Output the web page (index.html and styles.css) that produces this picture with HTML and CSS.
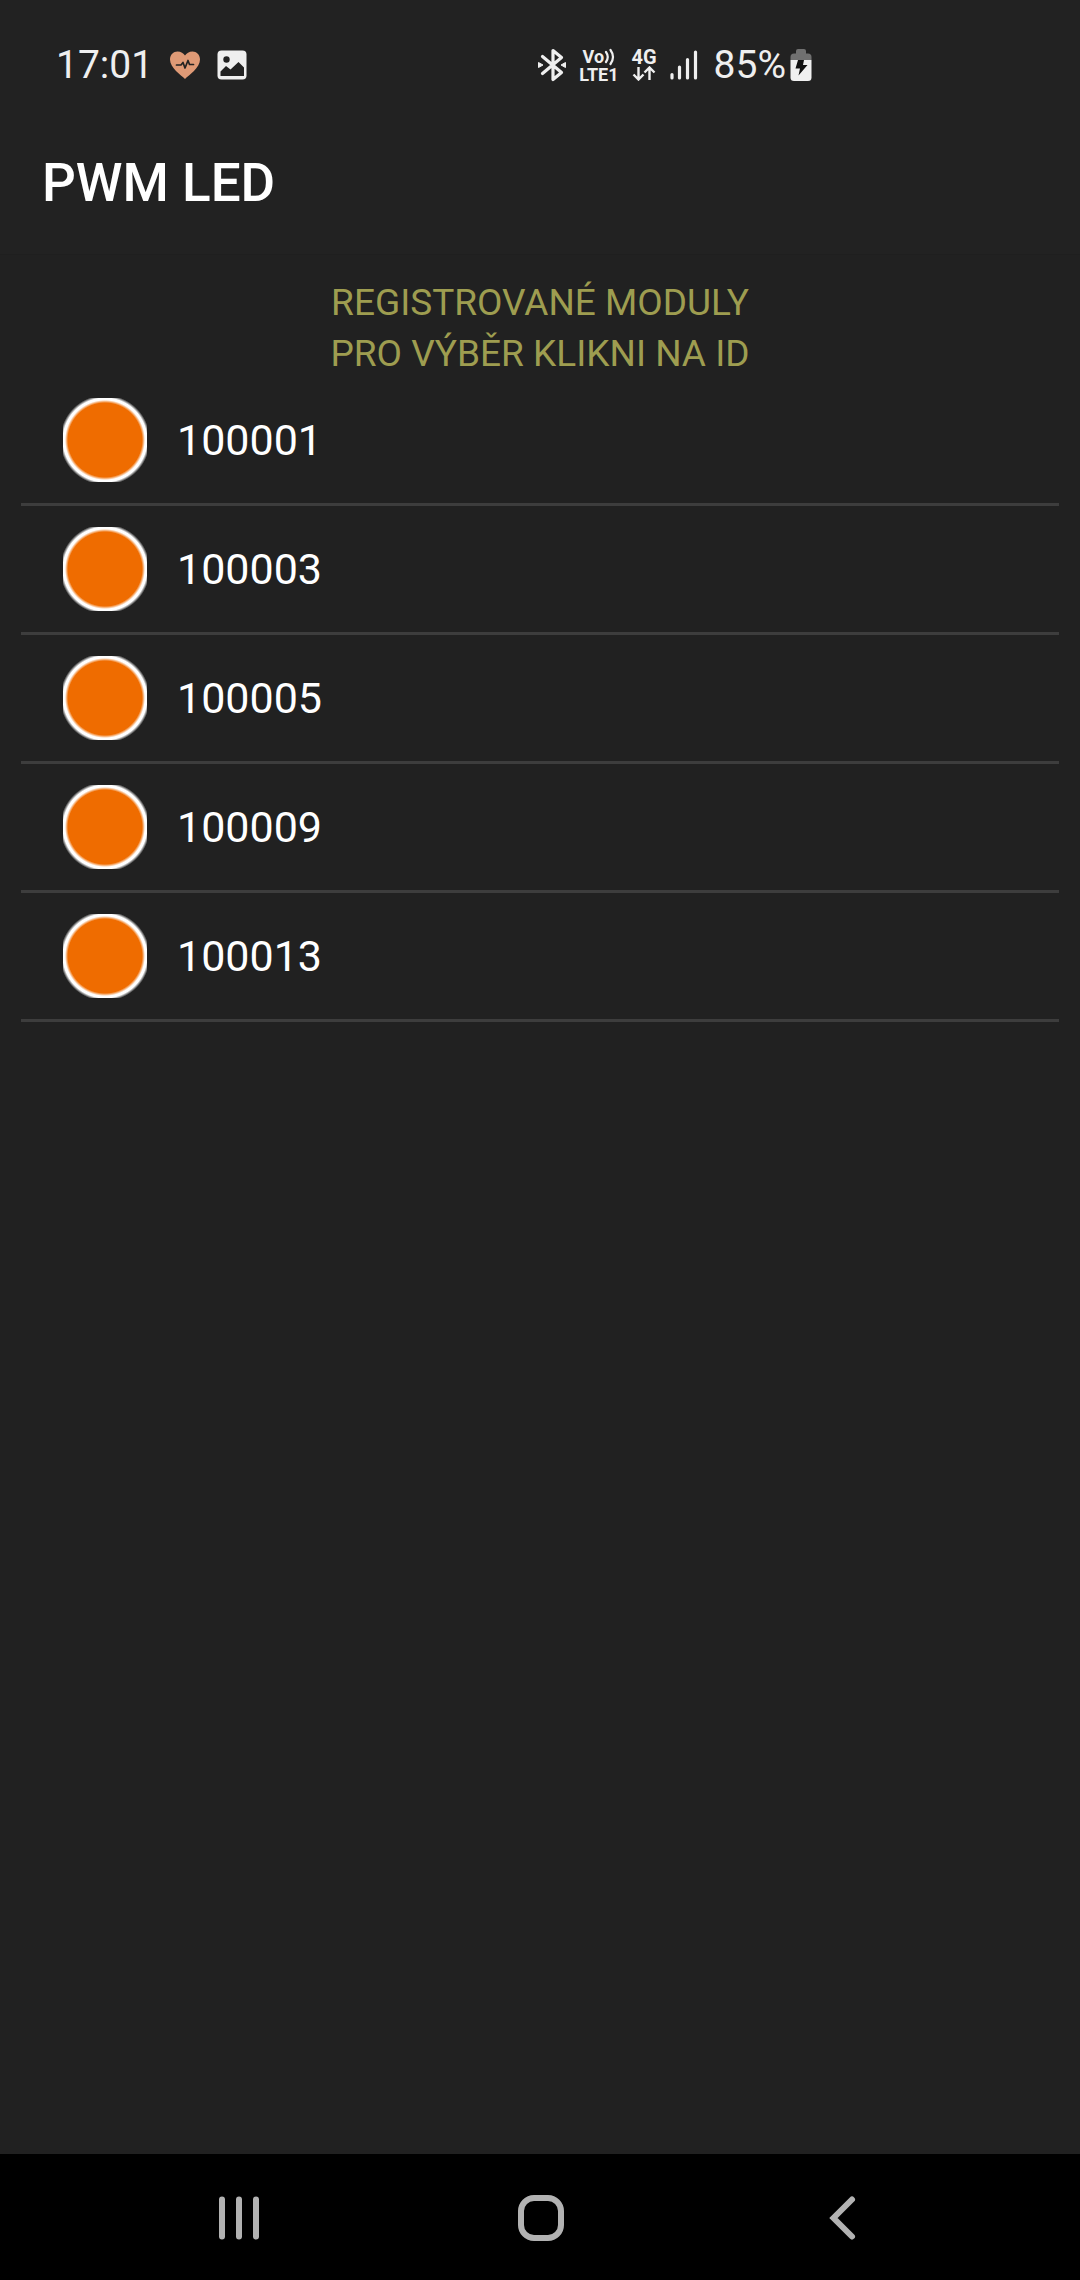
FILE: index.html
```
<!DOCTYPE html>
<html lang="cs">
<head>
    <meta charset="UTF-8">
    <meta name="viewport" content="width=device-width, initial-scale=1.0">
    <title>PWM LED</title>
    <link rel="stylesheet" href="styles.css">
</head>
<body>

    <div class="status-bar">
        <div class="status-left">
            <span class="time">17:01</span>
            <svg width="32" height="30" viewBox="0 0 32 30">
                <path d="M16 29C12 25 1 18 1 9.500C1 4.500 4.500 1.500 8.500 1.500C12 1.500 14.500 3.500 16 5.500C17.500 3.500 20 1.500 23.500 1.500C27.500 1.500 31 4.500 31 9.500C31 18 20 25 16 29Z" fill="#df9a76"/>
                <path d="M7.500 15H12L14 12.500L16 18L19 10.500L20.500 14.500H24.500" fill="none" stroke="#222" stroke-width="1.700" stroke-linecap="round" stroke-linejoin="round"/>
            </svg>
            <svg width="30" height="30" viewBox="0 0 30 30">
                <rect x="0.500" y="0.500" width="29" height="29" rx="4" fill="#efefef"/>
                <circle cx="9.500" cy="9.500" r="3.200" fill="#222"/>
                <path d="M3.500 26V21.500L9 16L13.500 19.500L21.500 12L27 17.500V26Z" fill="#222"/>
            </svg>
        </div>

        <div class="status-right">
            <svg width="28" height="34" viewBox="0 0 28 34">
                <path d="M4.500 8.500L23.500 24.500L15 31.500V2.500L23.500 9.500L4.500 25.500" fill="none" stroke="#efefef" stroke-width="3.200" stroke-linecap="round" stroke-linejoin="round"/>
                <path d="M0.500 14.500L5 17L0.500 19.500Z M27.500 14.500L23 17L27.500 19.500Z" fill="#efefef" stroke="#efefef" stroke-linejoin="round"/>
            </svg>
            <div class="volte">
                <span class="vo">Vo<svg width="11" height="18" viewBox="0 0 11 18"><path d="M2 4Q5.500 9 2 14M6.500 2Q11.500 9 6.500 16" fill="none" stroke="#efefef" stroke-width="2.200" stroke-linecap="round"/></svg></span>
                <span>LTE1</span>
            </div>
            <div class="network">
                <span>4G</span>
                <svg width="24" height="15" viewBox="0 0 24 15">
                    <path d="M6.500 1V13M1.500 8.500L6.500 13.500L11.500 8.500M17.500 14V2M12.500 6.500L17.500 1.500L22.500 6.500" fill="none" stroke="#efefef" stroke-width="2.400"/>
                </svg>
            </div>
            <svg width="28" height="30" viewBox="0 0 28 30">
                <path d="M2 24.500V28M9.500 17V28M17.500 9.500V28M25.500 2V28" stroke="#efefef" stroke-width="3.200" stroke-linecap="round"/>
            </svg>
            <div class="battery">
                <span>85%</span>
                <svg width="22" height="34" viewBox="0 0 22 34">
                    <path d="M0.500 12V9Q0.500 5.500 4 5.500H6V3Q6 1 8 1H14Q16 1 16 3V5.500H18Q21.500 5.500 21.500 9V12Z" fill="#707070"/>
                    <path d="M0.500 12H21.500V29.500Q21.500 33 18 33H4Q0.500 33 0.500 29.500Z" fill="#f0f0f0"/>
                    <path d="M8 12H14L13 17H17.500L8.500 27.500L10 20.500H5.500Z" fill="#111"/>
                </svg>
            </div>
        </div>
    </div>

    <header class="app-bar">
        <h1>PWM LED</h1>
    </header>

    <main>
        <p class="hint">REGISTROVANÉ MODULY<br>PRO VÝBĚR KLIKNI NA ID</p>

        <ul class="modules">
            <li><button><span class="dot"></span>100001</button></li>
            <li><button><span class="dot"></span>100003</button></li>
            <li><button><span class="dot"></span>100005</button></li>
            <li><button><span class="dot"></span>100009</button></li>
            <li><button><span class="dot"></span>100013</button></li>
        </ul>
    </main>

    <nav class="nav-bar">
        <button aria-label="Poslední aplikace">
            <svg width="48" height="48" viewBox="0 0 48 48">
                <path d="M7 5.500V42.500M24 5.500V42.500M41 5.500V42.500" stroke="#b2b2b2" stroke-width="6" stroke-linecap="round"/>
            </svg>
        </button>
        <button aria-label="Domů">
            <svg width="48" height="48" viewBox="0 0 48 48">
                <rect x="4" y="4" width="40" height="40" rx="13" fill="none" stroke="#b2b2b2" stroke-width="6"/>
            </svg>
        </button>
        <button aria-label="Zpět">
            <svg width="48" height="48" viewBox="0 0 48 48">
                <path d="M33 5.500L14.500 24L33 42.500" fill="none" stroke="#b2b2b2" stroke-width="6" stroke-linecap="round"/>
            </svg>
        </button>
    </nav>

</body>
</html>
```
FILE: styles.css
```
/* Basic styling */
body {
    font-family: Roboto, "Noto Sans", sans-serif;
    display: flex;
    flex-direction: column;
    min-height: 100vh;
    margin: 0;
    background-color: #212121;
    color: #ffffff;
}

svg {
    display: block;
    flex-shrink: 0;
}

button {
    font-family: inherit;
    color: inherit;
    background: none;
    border: none;
    padding: 0;
    cursor: pointer;
}

/* Status bar */
.status-bar {
    display: flex;
    justify-content: space-between;
    align-items: center;
    height: 130px;
    padding: 0 268px 0 56px;
    background-color: #222222;
    color: #efefef;
}

.status-left,
.status-right {
    display: flex;
    align-items: center;
}

.status-left {
    gap: 16px;
}

.status-right {
    gap: 13px;
}

.time {
    font-size: 39px;
}

.volte,
.network {
    display: flex;
    flex-direction: column;
    align-items: center;
    font-size: 18px;
    font-weight: 700;
    line-height: 17px;
}

.network {
    font-size: 20px;
}

.vo {
    display: flex;
}

.battery {
    display: flex;
    align-items: center;
    gap: 4px;
    margin-left: 3px;
    font-size: 39px;
}

/* App bar */
.app-bar {
    box-sizing: border-box;
    display: flex;
    align-items: center;
    height: 125px;
    padding: 0 42px 18px;
    background-color: #222222;
    border-bottom: 1px solid #1f1f1f;
}

.app-bar h1 {
    margin: 0;
    font-size: 53px;
    font-weight: 500;
    line-height: 64px;
}

/* Module list */
main {
    flex: 1;
    padding: 22px 21px;
}

.hint {
    margin: 0 0 -2px;
    color: #9e9d50;
    font-size: 37px;
    line-height: 51px;
    text-align: center;
}

.modules {
    list-style: none;
    margin: 0;
    padding: 0;
}

.modules li {
    border-bottom: 3px solid #3d3d3d;
}

.modules button {
    display: flex;
    align-items: center;
    gap: 30px;
    width: 100%;
    padding: 21px 42px;
    font-size: 43px;
    line-height: 51px;
}

/* Circle is slightly bigger than its box, so the edges are cut flat */
.dot {
    width: 84px;
    height: 84px;
    background: radial-gradient(circle, #ef6c00 37px, #ffffff 40px, #ffffff 42px, transparent 45px);
}

/* Navigation bar */
.nav-bar {
    box-sizing: border-box;
    display: flex;
    height: 126px;
    padding: 2px 86px 0 88px;
    background-color: #000000;
}

.nav-bar button {
    display: flex;
    flex: 1;
    justify-content: center;
    align-items: center;
}
```
